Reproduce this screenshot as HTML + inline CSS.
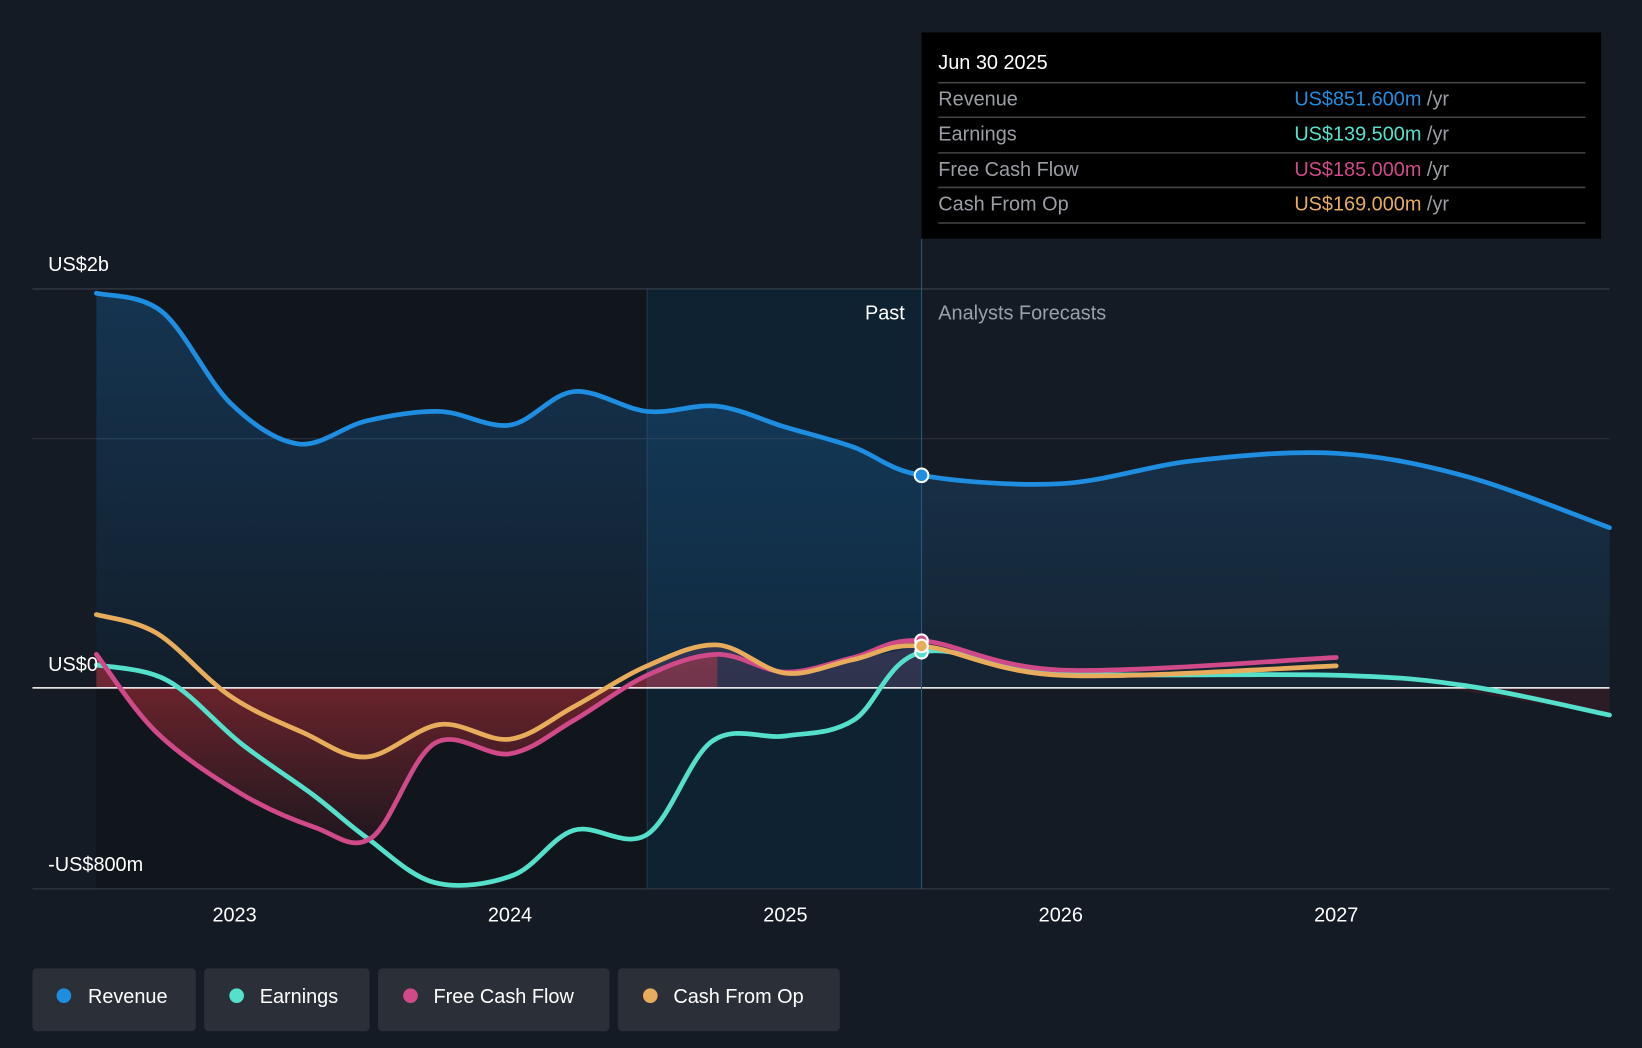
<!DOCTYPE html>
<html><head><meta charset="utf-8"><style>
html,body{margin:0;padding:0;background:#151b24;}
svg{display:block;font-family:"Liberation Sans",sans-serif;}
</style></head><body>
<svg width="1642" height="1048" viewBox="0 0 1568 1001" preserveAspectRatio="none">
<defs>
<linearGradient id="rev" x1="0" y1="0" x2="0" y2="1"><stop offset="0" stop-color="#1d6fb3" stop-opacity="0.35"/><stop offset="1" stop-color="#1d6fb3" stop-opacity="0.1"/></linearGradient>
<linearGradient id="neg" x1="0" y1="0" x2="0" y2="1"><stop offset="0" stop-color="#c0303a" stop-opacity="0.75"/><stop offset="1" stop-color="#c0303a" stop-opacity="0.1"/></linearGradient>
</defs>
<rect width="1568" height="1001" fill="#151b24"/>
<rect x="92" y="276" width="526" height="573" fill="#11151c"/>
<rect x="618" y="276" width="262" height="573" fill="#0f2232"/>
<line x1="31" y1="276" x2="1537" y2="276" stroke="#3a404a"/>
<line x1="31" y1="419" x2="1537" y2="419" stroke="#2c323c"/>
<line x1="31" y1="849" x2="1537" y2="849" stroke="#3a404a"/>
<line x1="618" y1="276" x2="618" y2="849" stroke="#26384a"/>
<path id="revfill" fill="url(#rev)"/>
<path id="negfill" fill="url(#neg)" opacity="0.8"/>
<path id="midfill" fill="#7a4a70" opacity="0.3"/>
<path d="M1380,657 L1537,657 1537,683 Z" fill="#3a1e28" opacity="0.6"/>
<line x1="31" y1="657" x2="1537" y2="657" stroke="#ffffff" stroke-width="1.5"/>
<line x1="880" y1="228" x2="880" y2="849" stroke="#2b5a7a"/>
<g fill="none" stroke-width="4.5" stroke-linejoin="round" stroke-linecap="round">
<path id="lrev" stroke="#1f8de0"/>
<path id="lear" stroke="#55e0cc"/>
<path id="lfcf" stroke="#d04a8a"/>
<path id="lcfo" stroke="#e8ad5c"/>
</g>
<circle cx="880" cy="454" r="6.5" fill="#1f8de0" stroke="#fff" stroke-width="2"/>
<circle cx="880" cy="612" r="6" fill="#d04a8a" stroke="#fff" stroke-width="2"/>
<circle cx="880" cy="623" r="6" fill="#55e0cc" stroke="#fff" stroke-width="2"/>
<circle cx="880" cy="617" r="6" fill="#e8ad5c" stroke="#fff" stroke-width="2"/>
<g font-size="19" fill="#ffffff">
<text x="46" y="259">US$2b</text>
<text x="46" y="641">US$0</text>
<text x="46" y="832">-US$800m</text>
<text x="864" y="305" text-anchor="end">Past</text>
<text x="896" y="305" fill="#9aa0a8">Analysts Forecasts</text>
<g text-anchor="middle"><text x="224" y="880">2023</text><text x="487" y="880">2024</text><text x="750" y="880">2025</text><text x="1013" y="880">2026</text><text x="1276" y="880">2027</text></g>
</g>
<rect x="880" y="31" width="649" height="197" fill="#000"/>
<g font-size="19">
<text x="896" y="66" fill="#fff">Jun 30 2025</text>
<g stroke="#444" stroke-width="1.5"><line x1="896" y1="79" x2="1514" y2="79"/><line x1="896" y1="112" x2="1514" y2="112"/><line x1="896" y1="146" x2="1514" y2="146"/><line x1="896" y1="179" x2="1514" y2="179"/><line x1="896" y1="213" x2="1514" y2="213"/></g>
<g fill="#9a9ea4"><text x="896" y="101">Revenue</text><text x="896" y="134">Earnings</text><text x="896" y="168">Free Cash Flow</text><text x="896" y="201">Cash From Op</text></g>
<text x="1236" y="101" fill="#1f8de0">US$851.600m <tspan fill="#9a9ea4">/yr</tspan></text>
<text x="1236" y="134" fill="#55e0cc">US$139.500m <tspan fill="#9a9ea4">/yr</tspan></text>
<text x="1236" y="168" fill="#d04a8a">US$185.000m <tspan fill="#9a9ea4">/yr</tspan></text>
<text x="1236" y="201" fill="#e8ad5c">US$169.000m <tspan fill="#9a9ea4">/yr</tspan></text>
</g>
<g font-size="19" fill="#fff">
<rect x="31" y="925" width="156" height="60" rx="4" fill="#2a2f38"/><circle cx="61" cy="951" r="7" fill="#1f8de0"/><text x="84" y="958">Revenue</text>
<rect x="195" y="925" width="158" height="60" rx="4" fill="#2a2f38"/><circle cx="226" cy="951" r="7" fill="#55e0cc"/><text x="248" y="958">Earnings</text>
<rect x="361" y="925" width="221" height="60" rx="4" fill="#2a2f38"/><circle cx="392" cy="951" r="7" fill="#d04a8a"/><text x="414" y="958">Free Cash Flow</text>
<rect x="590" y="925" width="212" height="60" rx="4" fill="#2a2f38"/><circle cx="621" cy="951" r="7" fill="#e8ad5c"/><text x="643" y="958">Cash From Op</text>
</g>
</svg>
<script>
function sm(p){var d="M"+p[0]+","+p[1];for(var i=0;i<p.length-2;i+=2){var x0=p[i-2]!==undefined?p[i-2]:p[i],y0=p[i-1]!==undefined?p[i-1]:p[i+1],x1=p[i],y1=p[i+1],x2=p[i+2],y2=p[i+3],x3=p[i+4]!==undefined?p[i+4]:x2,y3=p[i+5]!==undefined?p[i+5]:y2;d+=" C"+(x1+(x2-x0)/6)+","+(y1+(y2-y0)/6)+" "+(x2-(x3-x1)/6)+","+(y2-(y3-y1)/6)+" "+x2+","+y2;}return d;}
var R=[92,280,155,298,220,385,285,424,350,402,420,393,487,406,548,374,618,393,685,388,750,408,815,427,880,454,1013,462,1140,440,1276,433,1400,455,1537,504];
var E=[92,635,160,650,230,710,300,760,350,800,415,843,490,836,548,793,618,797,680,708,750,703,815,688,880,623,1013,643,1276,645,1400,655,1537,683];
var F=[92,625,150,700,230,758,300,790,355,800,415,710,487,720,548,688,618,645,685,625,750,642,815,628,880,612,1013,640,1276,628];
var C=[92,587,150,605,220,665,290,700,350,723,420,692,487,706,548,675,618,636,685,616,750,643,815,630,880,617,1013,645,1276,636];
function s(id,d){document.getElementById(id).setAttribute("d",d);}
s("lrev",sm(R));s("lear",sm(E));s("lfcf",sm(F));s("lcfo",sm(C));
s("revfill",sm(R)+" L1537,657 L92,657 Z");
s("negfill",sm(F.slice(0,20))+" L685,657 L92,657 Z");
s("midfill",sm(C.slice(16,26))+" L880,657 L618,657 Z");
</script>
</body></html>
